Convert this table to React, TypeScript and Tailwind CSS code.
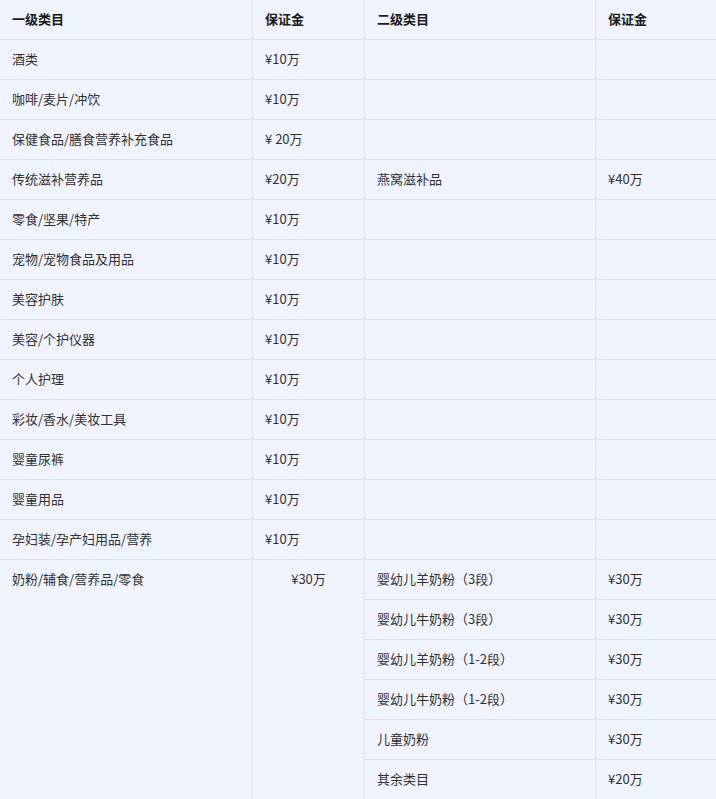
import React from "react";

const rows: [string, string, string, string][] = [
  ["酒类", "¥10万", "", ""],
  ["咖啡/麦片/冲饮", "¥10万", "", ""],
  ["保健食品/膳食营养补充食品", "¥ 20万", "", ""],
  ["传统滋补营养品", "¥20万", "燕窝滋补品", "¥40万"],
  ["零食/坚果/特产", "¥10万", "", ""],
  ["宠物/宠物食品及用品", "¥10万", "", ""],
  ["美容护肤", "¥10万", "", ""],
  ["美容/个护仪器", "¥10万", "", ""],
  ["个人护理", "¥10万", "", ""],
  ["彩妆/香水/美妆工具", "¥10万", "", ""],
  ["婴童尿裤", "¥10万", "", ""],
  ["婴童用品", "¥10万", "", ""],
  ["孕妇装/孕产妇用品/营养", "¥10万", "", ""],
];

const sub: [string, string][] = [
  ["婴幼儿羊奶粉（3段）", "¥30万"],
  ["婴幼儿牛奶粉（3段）", "¥30万"],
  ["婴幼儿羊奶粉（1-2段）", "¥30万"],
  ["婴幼儿牛奶粉（1-2段）", "¥30万"],
  ["儿童奶粉", "¥30万"],
  ["其余类目", "¥20万"],
];

const td = "border border-[#dde1ea] px-3 pt-[9px] pb-[11px] h-10 align-top leading-[19px]";

export default function App() {
  return (
    <div
      className="w-[716px] h-[799px] overflow-hidden bg-[#f0f4fe] text-[13px] text-[#303030]"
      style={{ fontFamily: '"Microsoft YaHei", "Noto Sans CJK SC", "Noto Sans", sans-serif' }}
    >
      <table className="border-collapse table-fixed w-[718px] -ml-px -mt-px">
        <colgroup>
          <col className="w-[253px]" />
          <col className="w-[112px]" />
          <col className="w-[231px]" />
          <col className="w-[122px]" />
        </colgroup>
        <thead>
          <tr>
            <th className={`${td} text-left font-bold text-[#1a1a1a]`}>一级类目</th>
            <th className={`${td} text-left font-bold text-[#1a1a1a]`}>保证金</th>
            <th className={`${td} text-left font-bold text-[#1a1a1a]`}>二级类目</th>
            <th className={`${td} text-left font-bold text-[#1a1a1a]`}>保证金</th>
          </tr>
        </thead>
        <tbody>
          {rows.map((r, i) => (
            <tr key={i}>
              <td className={td}>{r[0]}</td>
              <td className={td}>{r[1]}</td>
              <td className={td}>{r[2]}</td>
              <td className={td}>{r[3]}</td>
            </tr>
          ))}
          {sub.map((s, i) => (
            <tr key={`s${i}`}>
              {i === 0 && (
                <>
                  <td className={td} rowSpan={6}>奶粉/辅食/营养品/零食</td>
                  <td className={`${td} text-center`} rowSpan={6}>¥30万</td>
                </>
              )}
              <td className={td}>{s[0]}</td>
              <td className={td}>{s[1]}</td>
            </tr>
          ))}
        </tbody>
      </table>
    </div>
  );
}
